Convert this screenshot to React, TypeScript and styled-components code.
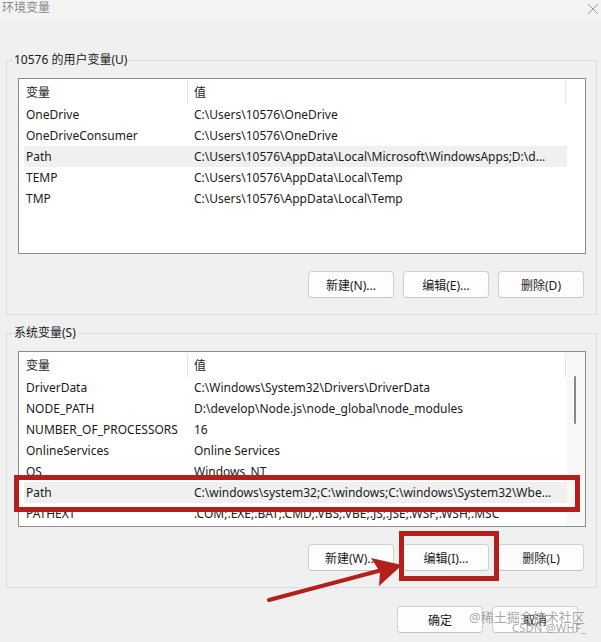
import React from "react";
import styled, { createGlobalStyle } from "styled-components";

const GlobalStyle = createGlobalStyle`
  html, body { margin: 0; padding: 0; background: #f0f0f0; }
  body {
    font-family: "Noto Sans", "Noto Sans CJK SC", sans-serif;
    font-size: 12px;
    color: #1a1a1a;
  }
`;

const Window = styled.div`
  position: relative;
  width: 601px;
  height: 642px;
  overflow: hidden;
  background: #f0f0f0;
`;

const TitleBar = styled.div`
  height: 22px;
  background: #f3f3f3;
  display: flex;
  align-items: flex-start;
  justify-content: space-between;
  padding: 0 2px 0 2px;
  box-sizing: border-box;
`;

const Title = styled.div`
  font-size: 12px;
  line-height: 16px;
  color: #8a8a8a;
`;

const CloseBox = styled.div`
  width: 12px;
  height: 12px;
  margin-top: 2px;
`;

const Body = styled.div`
  padding: 29px 4px 0 6px;
`;

const Group = styled.fieldset<{ $top?: number }>`
  margin: ${(p) => p.$top ?? 0}px 0 0 0;
  width: 591px;
  box-sizing: border-box;
  border: 1px solid #dcdcdc;
  padding: 9px 10px 16px 11px;
  min-width: 0;
`;

const Legend = styled.legend`
  padding: 0 2px;
  margin-left: -6px;
  line-height: 18px;
  font-size: 12px;
  color: #1a1a1a;
`;

const ListBox = styled.div`
  position: relative;
  width: 568px;
  height: 176px;
  box-sizing: border-box;
  border: 1px solid #8c8c8c;
  background: #ffffff;
  padding-left: 5px;
  overflow: hidden;
  display: flex;
`;

const ListInner = styled.div`
  width: 543px;
  display: flex;
  flex-direction: column;
`;

const HeaderRow = styled.div`
  display: grid;
  grid-template-columns: 164px 378px;
  height: 25px;
  flex-shrink: 0;
`;

const HeaderCell = styled.div<{ $pad: number }>`
  display: flex;
  align-items: center;
  padding-left: ${(p) => p.$pad}px;
  border-right: 1px solid #e3e3e3;
  margin-top: 1px;
  height: 24px;
  box-sizing: border-box;
`;

const Row = styled.div<{ $sel?: boolean }>`
  display: grid;
  grid-template-columns: 164px 378px;
  height: 21px;
  flex-shrink: 0;
  background: ${(p) => (p.$sel ? "#f0f0f0" : "transparent")};
`;

const Cell = styled.div<{ $pad: number }>`
  display: flex;
  align-items: center;
  padding-left: ${(p) => p.$pad}px;
  white-space: nowrap;
  overflow: hidden;
`;

const ScrollBar = styled.div`
  width: 18px;
  margin-left: auto;
  background: #f7f7f7;
  position: relative;
  flex-shrink: 0;
`;

const Thumb = styled.div`
  position: absolute;
  left: 7px;
  top: 24px;
  width: 2px;
  height: 48px;
  border-radius: 1px;
  background: #868686;
`;

const ButtonRow = styled.div<{ $gap?: number }>`
  display: flex;
  justify-content: flex-end;
  gap: 9px;
  padding-right: 2px;
  margin-top: ${(p) => p.$gap ?? 17}px;
`;

const Button = styled.div`
  width: 86px;
  height: 27px;
  box-sizing: border-box;
  border: 1px solid #d0d0d0;
  border-bottom-color: #c4c4c4;
  border-radius: 4px;
  background: #fdfdfd;
  display: flex;
  align-items: center;
  justify-content: center;
  font-size: 12px;
  color: #1a1a1a;
`;

const DialogButtons = styled(ButtonRow)`
  padding-right: 19px;
`;

const RedBox = styled.div<{ $l: number; $t: number; $w: number; $h: number }>`
  position: absolute;
  left: ${(p) => p.$l}px;
  top: ${(p) => p.$t}px;
  width: ${(p) => p.$w}px;
  height: ${(p) => p.$h}px;
  box-sizing: border-box;
  border: 5px solid #b3201b;
  pointer-events: none;
`;

const Overlay = styled.svg`
  position: absolute;
  left: 0;
  top: 0;
  pointer-events: none;
`;

const Watermark = styled.div`
  position: absolute;
  left: 469px;
  top: 608px;
  font-size: 13px;
  line-height: 18px;
  color: rgba(140, 140, 140, 0.75);
  pointer-events: none;
  white-space: nowrap;
`;

const SubMark = styled.div`
  position: absolute;
  left: 512px;
  top: 621px;
  font-size: 11px;
  line-height: 13px;
  color: rgba(140, 140, 140, 0.75);
  pointer-events: none;
  white-space: nowrap;
  letter-spacing: 0.3px;
`;

type Item = { name: string; value: string; sel?: boolean };

const userVars: Item[] = [
  { name: "OneDrive", value: "C:\\Users\\10576\\OneDrive" },
  { name: "OneDriveConsumer", value: "C:\\Users\\10576\\OneDrive" },
  {
    name: "Path",
    value: "C:\\Users\\10576\\AppData\\Local\\Microsoft\\WindowsApps;D:\\d...",
    sel: true,
  },
  { name: "TEMP", value: "C:\\Users\\10576\\AppData\\Local\\Temp" },
  { name: "TMP", value: "C:\\Users\\10576\\AppData\\Local\\Temp" },
];

const sysVars: Item[] = [
  { name: "DriverData", value: "C:\\Windows\\System32\\Drivers\\DriverData" },
  { name: "NODE_PATH", value: "D:\\develop\\Node.js\\node_global\\node_modules" },
  { name: "NUMBER_OF_PROCESSORS", value: "16" },
  { name: "OnlineServices", value: "Online Services" },
  { name: "OS", value: "Windows_NT" },
  {
    name: "Path",
    value: "C:\\windows\\system32;C:\\windows;C:\\windows\\System32\\Wbe...",
    sel: true,
  },
  { name: "PATHEXT", value: ".COM;.EXE;.BAT;.CMD;.VBS;.VBE;.JS;.JSE;.WSF;.WSH;.MSC" },
];

function VarList({ items, scroll }: { items: Item[]; scroll?: boolean }) {
  return (
    <ListBox>
      <ListInner>
        <HeaderRow>
          <HeaderCell $pad={2}>变量</HeaderCell>
          <HeaderCell $pad={6}>值</HeaderCell>
        </HeaderRow>
        {items.map((it) => (
          <Row key={it.name} $sel={it.sel}>
            <Cell $pad={2}>{it.name}</Cell>
            <Cell $pad={6}>{it.value}</Cell>
          </Row>
        ))}
      </ListInner>
      {scroll && (
        <ScrollBar>
          <Thumb />
        </ScrollBar>
      )}
    </ListBox>
  );
}

export default function App() {
  return (
    <>
      <GlobalStyle />
      <Window>
        <TitleBar>
          <Title>环境变量</Title>
          <CloseBox>
            <svg width="12" height="12" viewBox="0 0 12 12">
              <path d="M1 1 L11 11 M11 1 L1 11" stroke="#9a9a9a" strokeWidth="1" fill="none" />
            </svg>
          </CloseBox>
        </TitleBar>
        <Body>
          <Group>
            <Legend>10576 的用户变量(U)</Legend>
            <VarList items={userVars} />
            <ButtonRow>
              <Button>新建(N)...</Button>
              <Button>编辑(E)...</Button>
              <Button>删除(D)</Button>
            </ButtonRow>
          </Group>
          <Group $top={9}>
            <Legend>系统变量(S)</Legend>
            <VarList items={sysVars} scroll />
            <ButtonRow>
              <Button>新建(W)...</Button>
              <Button>编辑(I)...</Button>
              <Button>删除(L)</Button>
            </ButtonRow>
          </Group>
          <DialogButtons $gap={18}>
            <Button>确定</Button>
            <Button>取消</Button>
          </DialogButtons>
        </Body>

        <RedBox $l={14} $t={475} $w={566} $h={37} />
        <RedBox $l={399} $t={531} $w={100} $h={50} />
        <Overlay width="601" height="642" viewBox="0 0 601 642">
          <line x1="269" y1="600" x2="382" y2="570" stroke="#b3201b" strokeWidth="4" strokeLinecap="round" />
          <polygon points="402,565 371,558 380,572 379,586" fill="#b3201b" />
        </Overlay>
        <Watermark>@稀土掘金技术社区</Watermark>
        <SubMark>CSDN @WHF_</SubMark>
      </Window>
    </>
  );
}
